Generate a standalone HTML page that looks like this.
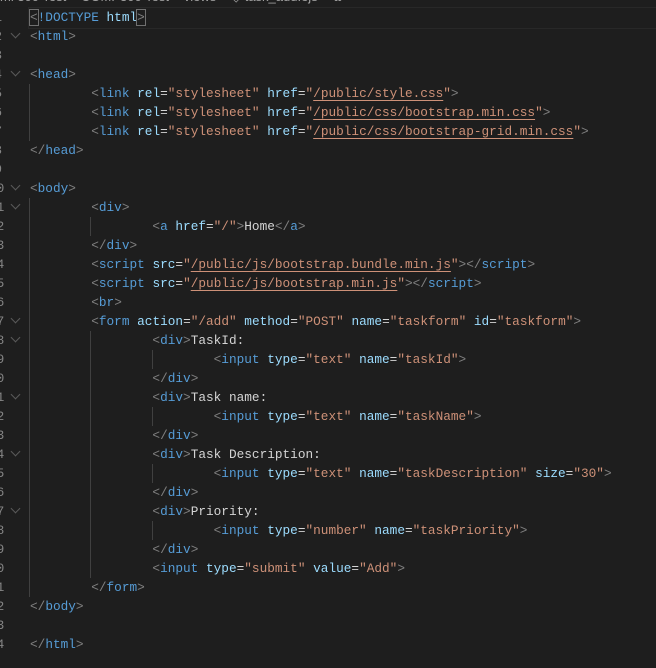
<!DOCTYPE html>
<html><head><style>
body{margin:0;background:#1e1e1e;width:656px;height:668px;overflow:hidden;position:relative;font-family:"Liberation Mono",monospace;font-size:12.75px;}
.l{position:absolute;left:30px;height:19px;line-height:19px;white-space:pre;tab-size:8;color:#d4d4d4;}
.n{position:absolute;left:-11px;width:13px;text-align:right;height:19px;line-height:19px;color:#858585;}
.f{position:absolute;left:12px;width:6px;height:6px;border-right:1px solid #5a5a5a;border-bottom:1px solid #5a5a5a;transform:rotate(45deg);}
.g{position:absolute;width:1px;background:#404040;}
.b{color:#808080}.t{color:#569cd6}.a{color:#9cdcfe}.s{color:#ce9178}
.u{text-decoration:underline;text-decoration-color:#ce9178;text-underline-offset:3px}
.cur{position:absolute;left:28px;right:0;top:7px;height:20px;border:1px solid #282828;border-right:none}
.crumb{position:absolute;left:0;top:-11px;color:#a0a0a0;font-family:"Liberation Sans",sans-serif;font-size:13px;white-space:pre}
</style></head><body>
<div class="crumb">ml 300 Test &gt; COMP300 Test &gt; views &gt; ◇ task_add.ejs &gt; ✿</div>
<div class="cur"></div>
<div class="g" style="left:29px;top:84px;height:57px"></div>
<div class="g" style="left:29px;top:198px;height:399px"></div>
<div class="g" style="left:90px;top:217px;height:19px"></div>
<div class="g" style="left:90px;top:331px;height:247px"></div>
<div class="g" style="left:152px;top:350px;height:19px"></div>
<div class="g" style="left:152px;top:407px;height:19px"></div>
<div class="g" style="left:152px;top:464px;height:19px"></div>
<div class="g" style="left:152px;top:521px;height:19px"></div>
<div class="f" style="top:30px"></div><div class="f" style="top:68px"></div><div class="f" style="top:182px"></div><div class="f" style="top:201px"></div><div class="f" style="top:315px"></div><div class="f" style="top:334px"></div><div class="f" style="top:391px"></div><div class="f" style="top:448px"></div><div class="f" style="top:505px"></div>
<div class="n" style="top:8px">1</div><div class="n" style="top:27px">2</div><div class="n" style="top:46px">3</div><div class="n" style="top:65px">4</div><div class="n" style="top:84px">5</div><div class="n" style="top:103px">6</div><div class="n" style="top:122px">7</div><div class="n" style="top:141px">8</div><div class="n" style="top:160px">9</div><div class="n" style="top:179px">10</div><div class="n" style="top:198px">11</div><div class="n" style="top:217px">12</div><div class="n" style="top:236px">13</div><div class="n" style="top:255px">14</div><div class="n" style="top:274px">15</div><div class="n" style="top:293px">16</div><div class="n" style="top:312px">17</div><div class="n" style="top:331px">18</div><div class="n" style="top:350px">19</div><div class="n" style="top:369px">20</div><div class="n" style="top:388px">21</div><div class="n" style="top:407px">22</div><div class="n" style="top:426px">23</div><div class="n" style="top:445px">24</div><div class="n" style="top:464px">25</div><div class="n" style="top:483px">26</div><div class="n" style="top:502px">27</div><div class="n" style="top:521px">28</div><div class="n" style="top:540px">29</div><div class="n" style="top:559px">30</div><div class="n" style="top:578px">31</div><div class="n" style="top:597px">32</div><div class="n" style="top:616px">33</div><div class="n" style="top:635px">34</div>
<div class="l" style="top:8px"><span class="b" style="outline:1px solid #707070">&lt;</span><span class="t">!DOCTYPE</span> <span class="a">html</span><span class="b" style="outline:1px solid #707070">&gt;</span></div>
<div class="l" style="top:27px"><span class="b">&lt;</span><span class="t">html</span><span class="b">&gt;</span></div>
<div class="l" style="top:65px"><span class="b">&lt;</span><span class="t">head</span><span class="b">&gt;</span></div>
<div class="l" style="top:84px">	<span class="b">&lt;</span><span class="t">link</span> <span class="a">rel</span>=<span class="s">"stylesheet"</span> <span class="a">href</span>=<span class="s">"<span class="u">/public/style.css</span>"</span><span class="b">&gt;</span></div>
<div class="l" style="top:103px">	<span class="b">&lt;</span><span class="t">link</span> <span class="a">rel</span>=<span class="s">"stylesheet"</span> <span class="a">href</span>=<span class="s">"<span class="u">/public/css/bootstrap.min.css</span>"</span><span class="b">&gt;</span></div>
<div class="l" style="top:122px">	<span class="b">&lt;</span><span class="t">link</span> <span class="a">rel</span>=<span class="s">"stylesheet"</span> <span class="a">href</span>=<span class="s">"<span class="u">/public/css/bootstrap-grid.min.css</span>"</span><span class="b">&gt;</span></div>
<div class="l" style="top:141px"><span class="b">&lt;/</span><span class="t">head</span><span class="b">&gt;</span></div>
<div class="l" style="top:179px"><span class="b">&lt;</span><span class="t">body</span><span class="b">&gt;</span></div>
<div class="l" style="top:198px">	<span class="b">&lt;</span><span class="t">div</span><span class="b">&gt;</span></div>
<div class="l" style="top:217px">		<span class="b">&lt;</span><span class="t">a</span> <span class="a">href</span>=<span class="s">"/"</span><span class="b">&gt;</span>Home<span class="b">&lt;/</span><span class="t">a</span><span class="b">&gt;</span></div>
<div class="l" style="top:236px">	<span class="b">&lt;/</span><span class="t">div</span><span class="b">&gt;</span></div>
<div class="l" style="top:255px">	<span class="b">&lt;</span><span class="t">script</span> <span class="a">src</span>=<span class="s">"<span class="u">/public/js/bootstrap.bundle.min.js</span>"</span><span class="b">&gt;&lt;/</span><span class="t">script</span><span class="b">&gt;</span></div>
<div class="l" style="top:274px">	<span class="b">&lt;</span><span class="t">script</span> <span class="a">src</span>=<span class="s">"<span class="u">/public/js/bootstrap.min.js</span>"</span><span class="b">&gt;&lt;/</span><span class="t">script</span><span class="b">&gt;</span></div>
<div class="l" style="top:293px">	<span class="b">&lt;</span><span class="t">br</span><span class="b">&gt;</span></div>
<div class="l" style="top:312px">	<span class="b">&lt;</span><span class="t">form</span> <span class="a">action</span>=<span class="s">"/add"</span> <span class="a">method</span>=<span class="s">"POST"</span> <span class="a">name</span>=<span class="s">"taskform"</span> <span class="a">id</span>=<span class="s">"taskform"</span><span class="b">&gt;</span></div>
<div class="l" style="top:331px">		<span class="b">&lt;</span><span class="t">div</span><span class="b">&gt;</span>TaskId:</div>
<div class="l" style="top:350px">			<span class="b">&lt;</span><span class="t">input</span> <span class="a">type</span>=<span class="s">"text"</span> <span class="a">name</span>=<span class="s">"taskId"</span><span class="b">&gt;</span></div>
<div class="l" style="top:369px">		<span class="b">&lt;/</span><span class="t">div</span><span class="b">&gt;</span></div>
<div class="l" style="top:388px">		<span class="b">&lt;</span><span class="t">div</span><span class="b">&gt;</span>Task name:</div>
<div class="l" style="top:407px">			<span class="b">&lt;</span><span class="t">input</span> <span class="a">type</span>=<span class="s">"text"</span> <span class="a">name</span>=<span class="s">"taskName"</span><span class="b">&gt;</span></div>
<div class="l" style="top:426px">		<span class="b">&lt;/</span><span class="t">div</span><span class="b">&gt;</span></div>
<div class="l" style="top:445px">		<span class="b">&lt;</span><span class="t">div</span><span class="b">&gt;</span>Task Description:</div>
<div class="l" style="top:464px">			<span class="b">&lt;</span><span class="t">input</span> <span class="a">type</span>=<span class="s">"text"</span> <span class="a">name</span>=<span class="s">"taskDescription"</span> <span class="a">size</span>=<span class="s">"30"</span><span class="b">&gt;</span></div>
<div class="l" style="top:483px">		<span class="b">&lt;/</span><span class="t">div</span><span class="b">&gt;</span></div>
<div class="l" style="top:502px">		<span class="b">&lt;</span><span class="t">div</span><span class="b">&gt;</span>Priority:</div>
<div class="l" style="top:521px">			<span class="b">&lt;</span><span class="t">input</span> <span class="a">type</span>=<span class="s">"number"</span> <span class="a">name</span>=<span class="s">"taskPriority"</span><span class="b">&gt;</span></div>
<div class="l" style="top:540px">		<span class="b">&lt;/</span><span class="t">div</span><span class="b">&gt;</span></div>
<div class="l" style="top:559px">		<span class="b">&lt;</span><span class="t">input</span> <span class="a">type</span>=<span class="s">"submit"</span> <span class="a">value</span>=<span class="s">"Add"</span><span class="b">&gt;</span></div>
<div class="l" style="top:578px">	<span class="b">&lt;/</span><span class="t">form</span><span class="b">&gt;</span></div>
<div class="l" style="top:597px"><span class="b">&lt;/</span><span class="t">body</span><span class="b">&gt;</span></div>
<div class="l" style="top:635px"><span class="b">&lt;/</span><span class="t">html</span><span class="b">&gt;</span></div>
</body></html>
